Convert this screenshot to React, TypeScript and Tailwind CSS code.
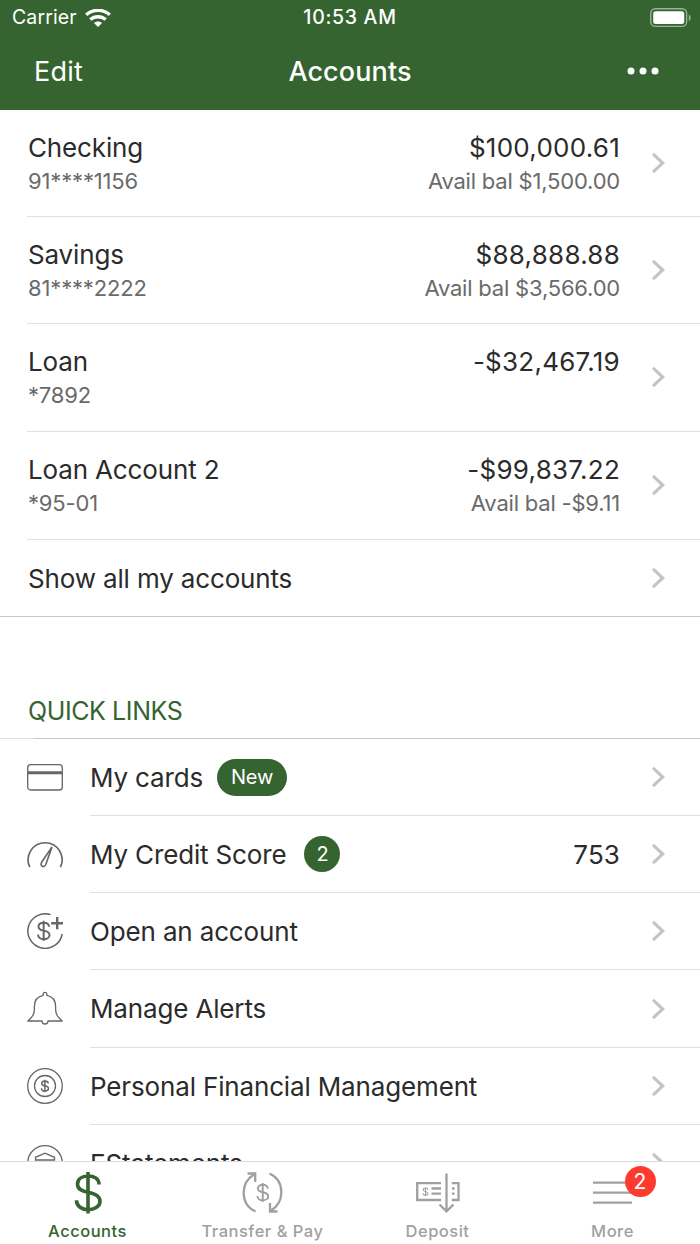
import { ReactNode } from "react";
import clsx from "clsx";

const accounts = [
  { name: "Checking", number: "91****1156", balance: "$100,000.61", available: "Avail bal $1,500.00", height: "h-[107px] pt-px" },
  { name: "Savings", number: "81****2222", balance: "$88,888.88", available: "Avail bal $3,566.00", height: "h-[107px] pt-0.5" },
  { name: "Loan", number: "*7892", balance: "-$32,467.19", available: "", height: "h-[108px] pt-px" },
  { name: "Loan Account 2", number: "*95-01", balance: "-$99,837.22", available: "Avail bal -$9.11", height: "h-[108px]" },
];

const DOLLAR = "M25 13.5C25 7.5 20 5 14 5S3.5 8 3.5 13.2 8 20 14 21.2 26 24.7 26 30.2 20 38.7 14 38.7 2.5 35.5 2.5 29.2M14 1V42.5";

function Chevron({ className }: { className?: string }) {
  return (
    <svg className={clsx("h-[22px] w-[14px] shrink-0", className)} viewBox="0 0 14 22" fill="none">
      <path d="M3 2.8L11.7 11L3 19.2" stroke="#c4c4c7" strokeWidth="3.2" strokeLinecap="round" />
    </svg>
  );
}

function LinkIcon({ children }: { children: ReactNode }) {
  return (
    <svg className="mb-0.5 size-9 shrink-0" viewBox="0 0 36 36" fill="none" stroke="#666" strokeWidth="1.3">
      {children}
    </svg>
  );
}

const quickLinks = [
  {
    label: "My cards",
    height: "h-[77px]",
    badge: "New",
    icon: (
      <>
        <rect x="0.7" y="5.7" width="34.6" height="25.3" rx="3" />
        <path d="M1 13.7H35" strokeWidth="3" />
      </>
    ),
  },
  {
    label: "My Credit Score",
    height: "h-[77px]",
    count: "2",
    value: "753",
    icon: (
      <>
        <path d="M2.8 31.2A17 17 0 1 1 33.4 31.2" strokeWidth="1.6" />
        <path d="M25 11L14.8 26C13.6 28.2 14 29.6 15.2 30.2C16.6 30.9 18 30.3 18.8 28.5Z" strokeWidth="1.6" />
      </>
    ),
  },
  {
    label: "Open an account",
    height: "h-[77px]",
    icon: (
      <>
        <path d="M23.5 1.6A17.3 17.3 0 1 0 35.2 21" strokeWidth="1.5" />
        <path d="M30.2 4V16.3M24.2 10.3H36" strokeWidth="2.4" />
        <path d={DOLLAR} transform="translate(9.8 7.2) scale(.49)" strokeWidth="4" />
      </>
    ),
  },
  {
    label: "Manage Alerts",
    height: "h-[78px]",
    icon: (
      <path
        d="M.8 31C5 27 7.4 25 7.4 19V16C7.4 10 10.5 6.5 16.2 5.3V4C16.2 1.7 19.8 1.7 19.8 4V5.3C25.5 6.5 28.6 10 28.6 16V19C28.6 25 31 27 35.2 31H21C21 35 15 35 15 31Z"
        strokeLinejoin="round"
      />
    ),
  },
  {
    label: "Personal Financial Management",
    height: "h-[77px]",
    icon: (
      <>
        <circle cx="18" cy="18" r="17.3" />
        <circle cx="18" cy="18" r="10.5" />
        <path d={DOLLAR} transform="translate(13.7 11.5) scale(.3)" strokeWidth="5" />
      </>
    ),
  },
  {
    label: "EStatements",
    height: "h-[77px]",
    icon: (
      <>
        <circle cx="18" cy="18" r="17.3" />
        <path d="M8.5 15V12.3L18 8.2L27.5 12.3V15Z" />
      </>
    ),
  },
];

const tabs = [
  {
    label: "Accounts",
    active: true,
    icon: <path d={DOLLAR} transform="translate(14 1)" strokeWidth="3.6" />,
  },
  {
    label: "Transfer & Pay",
    icon: (
      <>
        <path d="M20.5 41.5C5 34.5 5 13 19 4.5M12.5 3.5H20.2V12M34.5 3.5C50 10.5 50 32 36 40.5M42.5 41.5H35V33" />
        <path d={DOLLAR} transform="translate(21.3 12.5) scale(.46)" strokeWidth="4.2" />
      </>
    ),
  },
  {
    label: "Deposit",
    icon: (
      <>
        <path d="M31 13.2H7.2V30H31M41.8 13.2H48.5V30H41.8M36.5 3.5V41M29.5 34.5L36.5 41.3L43.5 34.5" />
        <path d="M21.5 18.5H31M21.5 23.7H31M42 18.5H44.5M42 23.7H44.5" />
        <path d={DOLLAR} transform="translate(12.6 17) scale(.21)" strokeWidth="5" />
      </>
    ),
  },
  {
    label: "More",
    badge: "2",
    icon: <path d="M8 12.6H47M8 22.6H47M8 32.6H47" />,
  },
];

export default function App() {
  return (
    <div className="flex h-[1244px] w-[700px] flex-col overflow-hidden bg-white font-['Inter',sans-serif] text-[#2b2b2b]">
      <header className="h-[110px] shrink-0 bg-[#356430] text-white">
        <div className="grid h-9 grid-cols-3 items-center">
          <div className="flex items-center gap-2 pl-3">
            <span className="text-[19.5px] tracking-[0.1px]">Carrier</span>
            <svg className="h-[19px] w-[26px]" viewBox="0 0 26 19" fill="none" stroke="white" strokeWidth="3.4">
              <path d="M1.2 5.8C7.8-.2 18.2-.2 24.8 5.8M5.3 10.6C9.7 6.7 16.3 6.7 20.7 10.6" />
              <path d="M13 18L9 14C11.2 12 14.8 12 17 14Z" fill="white" stroke="none" />
            </svg>
          </div>
          <span className="text-center text-[19.5px] font-medium tracking-[0.7px]">10:53 AM</span>
          <svg className="mr-[8px] h-5 w-[42px] justify-self-end" viewBox="0 0 42 20" fill="none">
            <rect x="0.8" y="0.8" width="35.8" height="17.6" rx="4.5" stroke="white" strokeOpacity="0.5" strokeWidth="1.4" />
            <rect x="3.2" y="3.2" width="31" height="12.8" rx="2.5" fill="white" />
            <path d="M38.8 6.5C41.3 7.5 41.3 12 38.8 13Z" fill="white" fillOpacity="0.5" />
          </svg>
        </div>
        <div className="grid h-[72px] grid-cols-3 items-center">
          <span className="pl-[34px] text-[27px] tracking-[0.2px]">Edit</span>
          <h1 className="pt-px text-center text-[27px] font-medium tracking-[0.1px]">Accounts</h1>
          <svg className="mr-[41px] mb-0.5 h-2 w-8 justify-self-end" viewBox="0 0 32 8" fill="white">
            <circle cx="4" cy="4" r="3.5" />
            <circle cx="16" cy="4" r="3.5" />
            <circle cx="28" cy="4" r="3.5" />
          </svg>
        </div>
      </header>

      <main className="min-h-0 flex-1 overflow-hidden">
        <section className="border-b border-[#c8c8c8]">
          {accounts.map((account) => (
            <div
              key={account.name}
              className={clsx("ml-[27px] flex items-center border-b border-[#e0e0e0] pr-[35px]", account.height)}
            >
              <div className="flex-1 pl-px">
                <div className="text-[26px] leading-[34px] tracking-[-0.15px]">{account.name}</div>
                <div className="h-8 text-[22px] leading-8 tracking-[-0.15px] text-[#6a6a6a]">{account.number}</div>
              </div>
              <div className="mr-[31px] text-right">
                <div className="text-[26px] leading-[34px] tracking-[0.25px]">{account.balance}</div>
                <div className="h-8 text-[22px] leading-8 tracking-[-0.2px] text-[#6a6a6a]">{account.available}</div>
              </div>
              <Chevron className="mb-0.5" />
            </div>
          ))}
          <div className="flex h-[76px] items-center pr-[35px] pl-7 text-[26px] tracking-[-0.15px]">
            <span className="flex-1">Show all my accounts</span>
            <Chevron />
          </div>
        </section>

        <h2 className="flex h-[121px] items-end pb-[8px] pl-7 text-[25px] tracking-[-0.4px] text-[#356430]">
          QUICK LINKS
        </h2>
        <div className="flex h-px">
          <div className="w-[34px] bg-[#dedede]" />
          <div className="flex-1 bg-[#c8c8c8]" />
        </div>

        <section>
          {quickLinks.map((link) => (
            <div key={link.label} className="flex items-center pl-[27px]">
              <LinkIcon>{link.icon}</LinkIcon>
              <div
                className={clsx(
                  "ml-[27px] flex flex-1 items-center border-b border-[#e0e0e0] pr-[35px] text-[26px] tracking-[-0.15px]",
                  link.height,
                )}
              >
                <span>{link.label}</span>
                {link.badge && (
                  <span className="ml-3.5 flex h-[37px] w-[70px] items-center justify-center rounded-full bg-[#356430] text-[20px] text-white">
                    {link.badge}
                  </span>
                )}
                {link.count && (
                  <span className="ml-[18px] flex size-9 items-center justify-center rounded-full bg-[#356430] text-[20px] text-white">
                    {link.count}
                  </span>
                )}
                <span className="mr-[31px] ml-auto tracking-[0.1px]">{link.value}</span>
                <Chevron />
              </div>
            </div>
          ))}
        </section>
      </main>

      <nav className="grid h-[83px] shrink-0 grid-cols-4 border-t border-[#dcdcdc] bg-white pt-[8px]">
        {tabs.map((tab) => (
          <div
            key={tab.label}
            className={clsx("flex flex-col items-center", tab.active ? "text-[#356430]" : "text-[#a0a0a0]")}
          >
            <div className="relative">
              <svg className="h-[46px] w-14" viewBox="0 0 56 46" fill="none" stroke="currentColor" strokeWidth="2.3">
                {tab.icon}
              </svg>
              {tab.badge && (
                <span className="absolute -top-1 left-10 flex size-[31px] items-center justify-center rounded-full bg-[#ff3b30] text-[21px] text-white">
                  {tab.badge}
                </span>
              )}
            </div>
            <span className="mt-[5px] text-[16.5px] leading-5 font-medium tracking-[0.5px]">{tab.label}</span>
          </div>
        ))}
      </nav>
    </div>
  );
}
